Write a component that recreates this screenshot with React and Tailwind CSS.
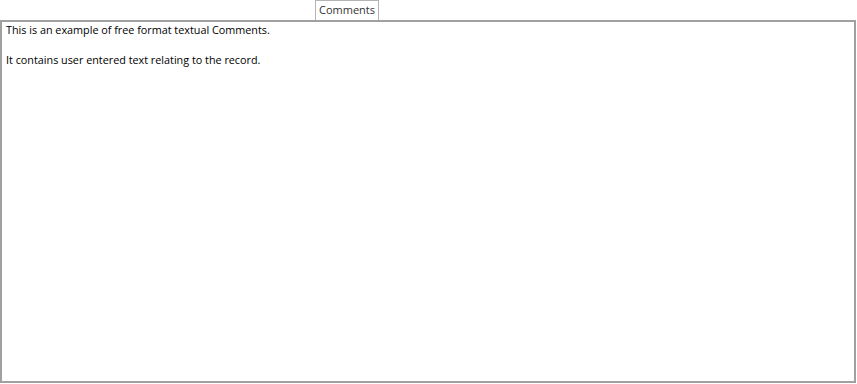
export default function App() {
  return (
    <div
      className="w-[857px] h-[384px] bg-white flex flex-col"
      style={{ fontFamily: '"Open Sans", "Noto Sans", sans-serif' }}
    >
      {/* Tab strip */}
      <div className="h-[20px] flex">
        <div className="ml-[315px] w-[64px] h-[20px] border border-b-0 border-[#b4b4b4] text-[11px] leading-[18px] text-[#333333] text-center">
          Comments
        </div>
      </div>

      {/* Comments body */}
      <div className="w-[856px] h-[363px] border-2 border-[#a0a0a0] px-[4px] pt-0 text-[10.8px] leading-[15px] text-black">
        <p>This is an example of free format textual Comments.</p>
        <p>&nbsp;</p>
        <p>It contains user entered text relating to the record.</p>
      </div>
    </div>
  );
}
